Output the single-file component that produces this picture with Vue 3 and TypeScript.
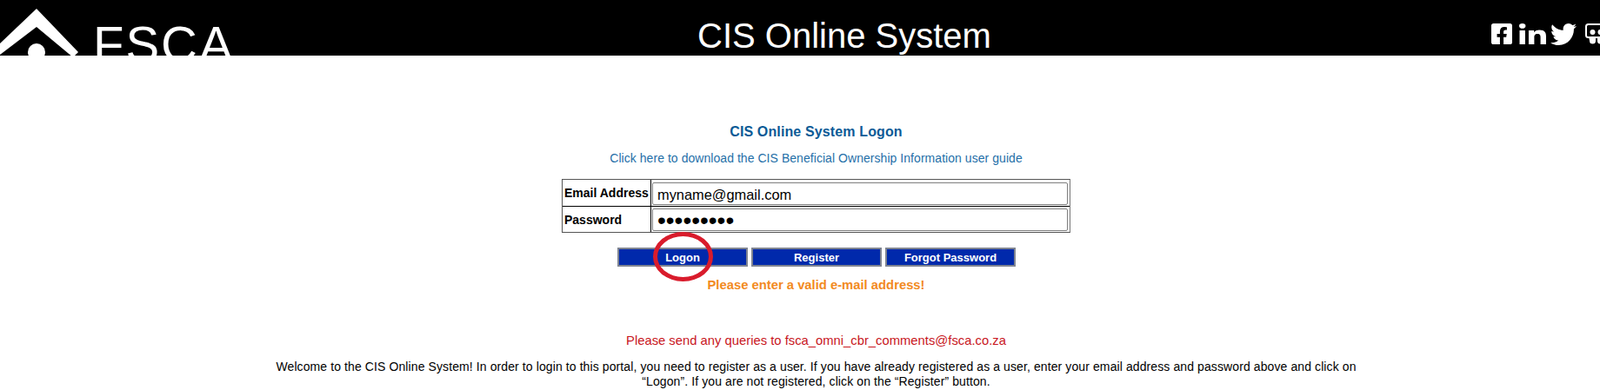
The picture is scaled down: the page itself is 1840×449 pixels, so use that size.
<template>
  <div class="page">
    <header class="topbar">
      <div class="logo">
        <svg class="logo-mark" width="96" height="64" viewBox="0 0 96 64">
          <path d="M-2 52 L42 10 L90 60 L84 66 L42 31 L-4 66 Z" fill="#fff" />
          <circle cx="42" cy="60" r="10" fill="#fff" />
        </svg>
        <span class="logo-text">FSCA</span>
      </div>
      <div class="title">CIS Online System</div>
      <div class="social">
        <svg class="fb" width="24" height="24" viewBox="0 32 448 448"><path fill="#fff" d="M400 32H48A48 48 0 0 0 0 80v352a48 48 0 0 0 48 48h137.25V327.69h-63V256h63v-54.64c0-62.15 37-96.48 93.67-96.48 27.14 0 55.52 4.84 55.52 4.84v61h-31.27c-30.81 0-40.42 19.12-40.42 38.73V256h68.78l-11 71.69h-57.78V480H400a48 48 0 0 0 48-48V80a48 48 0 0 0-48-48z" /></svg>
        <svg class="li" width="31" height="24" viewBox="0 0 448 448" preserveAspectRatio="none"><path fill="#fff" d="M100.28 448H7.4V148.9h92.88zM53.79 108.1C24.09 108.1 0 83.5 0 53.8a53.79 53.79 0 0 1 107.58 0c0 29.7-24.1 54.3-53.79 54.3zM447.9 448h-92.68V302.4c0-34.7-.7-79.2-48.29-79.2-48.29 0-55.69 37.7-55.69 76.7V448h-92.78V148.9h89.08v40.8h1.3c12.4-23.5 42.69-48.3 87.88-48.3 94 0 111.28 61.9 111.28 142.3V448z" /></svg>
        <svg class="tw" width="30" height="25" viewBox="0 48 512 416" preserveAspectRatio="none"><path fill="#fff" d="M459.37 151.716c.325 4.548.325 9.097.325 13.645 0 138.72-105.583 298.558-298.558 298.558-59.452 0-114.68-17.219-161.137-47.106 8.447.974 16.568 1.299 25.34 1.299 49.055 0 94.213-16.568 130.274-44.832-46.132-.975-84.792-31.188-98.112-72.772 6.498.974 12.995 1.624 19.818 1.624 9.421 0 18.843-1.3 27.614-3.573-48.081-9.747-84.143-51.98-84.143-102.985v-1.299c13.969 7.797 30.214 12.67 47.431 13.319-28.264-18.843-46.781-51.005-46.781-87.391 0-19.492 5.197-37.36 14.294-52.954 51.655 63.675 129.3 105.258 216.365 109.807-1.624-7.797-2.599-15.918-2.599-24.04 0-57.828 46.782-104.934 104.934-104.934 30.213 0 57.502 12.67 76.67 33.137 23.715-4.548 46.456-13.32 66.599-25.34-7.798 24.366-24.366 44.833-46.132 57.827 21.117-2.273 41.584-8.122 60.426-16.243-14.292 20.791-32.161 39.308-52.628 54.253z" /></svg>
        <svg class="ss" width="26" height="25" viewBox="0 0 26 25">
          <rect x="1" y="1" width="24" height="15" rx="2.5" fill="none" stroke="#fff" stroke-width="2" />
          <circle cx="8.5" cy="10" r="3" fill="#fff" />
          <circle cx="17.5" cy="10" r="3" fill="#fff" />
          <path d="M4 15h8v5a3.5 3.5 0 0 1-7 0zM14 15h8l-1 5a3.5 3.5 0 0 1-7 0z" fill="#fff" />
        </svg>
      </div>
    </header>

    <main class="content">
      <h1 class="logon-title">CIS Online System Logon</h1>
      <a class="guide" href="#">Click here to download the CIS Beneficial Ownership Information user guide</a>

      <table class="logon-table" cellspacing="0">
        <tbody>
          <tr>
            <th>Email Address</th>
            <td><input v-model="email" type="text" /></td>
          </tr>
          <tr>
            <th>Password</th>
            <td><input v-model="password" class="pw" type="password" /></td>
          </tr>
        </tbody>
      </table>

      <div class="buttons">
        <div class="logon-wrap">
          <button type="button">Logon</button>
          <span class="ring"></span>
        </div>
        <button type="button">Register</button>
        <button type="button">Forgot Password</button>
      </div>

      <p class="error">Please enter a valid e-mail address!</p>
      <p class="queries">Please send any queries to fsca_omni_cbr_comments@fsca.co.za</p>
      <p class="welcome">
        Welcome to the CIS Online System! In order to login to this portal, you need to register as a user. If you have already registered as a user, enter your email address and password above and click on “Logon”. If you are not registered, click on the “Register” button.
      </p>
    </main>
  </div>
</template>

<script setup lang="ts">
import { ref } from 'vue'

const email = ref('myname@gmail.com')
const password = ref('123456789')
</script>

<style>
html, body {
  margin: 0;
  background: #fff;
  overflow: hidden;
}
</style>

<style scoped>
.page {
  font-family: "Liberation Sans", Arial, sans-serif;
  font-size: 14px;
  color: #000;
  height: 449px;
  overflow: hidden;
}
.topbar {
  display: grid;
  grid-template-columns: 268px 1fr 166px;
  height: 64px;
  background: #000;
  overflow: hidden;
}
.logo {
  position: relative;
  display: flex;
}
.logo-mark {
  flex: none;
}
.logo-text {
  margin: 19px 0 0 11px;
  font-size: 58px;
  line-height: 64px;
  letter-spacing: 2px;
  color: #fff;
}
.title {
  text-align: center;
  font-size: 40px;
  line-height: 46px;
  padding-top: 18px;
  color: #fff;
}
.social {
  display: flex;
  align-items: flex-start;
  padding: 27px 0 0 41px;
}
.social svg {
  flex: none;
}
.li {
  margin-left: 8px;
}
.tw {
  margin-left: 5px;
}
.ss {
  margin-left: 10px;
}
.content {
  display: flex;
  flex-direction: column;
  align-items: center;
  padding: 79px 0 0 37px;
}
.logon-title {
  margin: 0;
  font-size: 16px;
  line-height: 18px;
  font-weight: bold;
  letter-spacing: 0.13px;
  color: #0b5a96;
}
.guide {
  margin-top: 12px;
  font-size: 14px;
  line-height: 18px;
  letter-spacing: 0.05px;
  color: #1f6fa8;
  text-decoration: none;
}
.logon-table {
  margin-top: 15px;
  width: 585px;
  border: 1px solid #555;
  border-right-color: #777;
  border-collapse: separate;
}
.logon-table th {
  width: 98px;
  padding: 0 1px 0 2px;
  border-right: 1px solid #000;
  border-bottom: 1px solid #000;
  font-size: 14px;
  text-align: left;
  white-space: nowrap;
  vertical-align: middle;
}
.logon-table td {
  padding: 3px 2px 1px 1px;
  border-bottom: 1px solid #000;
}
.logon-table tr:last-child th,
.logon-table tr:last-child td {
  border-bottom: 0;
}
.logon-table tr:last-child td {
  padding-top: 2px;
}
.logon-table input {
  display: block;
  box-sizing: border-box;
  width: 100%;
  height: 26px;
  padding: 2px 5px 0;
  border: 1px solid #808080;
  border-radius: 2px;
  font-family: "Liberation Sans", Arial, sans-serif;
  font-size: 16.4px;
  color: #000;
}
.logon-table input.pw {
  font-size: 28px;
}
.buttons {
  display: flex;
  gap: 4px;
  margin-top: 17px;
  margin-left: 1px;
}
.buttons button {
  display: block;
  width: 150px;
  height: 22px;
  padding: 0;
  border: 2px solid #7f8491;
  background: #0029ab;
  color: #fff;
  font-family: "Liberation Sans", Arial, sans-serif;
  font-size: 13px;
  font-weight: bold;
}
.logon-wrap {
  position: relative;
}
.ring {
  position: absolute;
  left: 41px;
  top: -18px;
  box-sizing: border-box;
  width: 69px;
  height: 57px;
  border: 5px solid #d91c2c;
  border-radius: 50%;
}
.error {
  margin: 12px 0 0;
  font-size: 14.8px;
  line-height: 18px;
  font-weight: bold;
  color: #f28a1e;
}
.queries {
  margin: 46px 0 0;
  font-size: 14.8px;
  line-height: 18px;
  color: #c8161d;
}
.welcome {
  margin: 13px 0 0;
  width: 1280px;
  font-size: 14px;
  line-height: 17px;
  letter-spacing: 0.1px;
  text-align: center;
  color: #000;
}
</style>
